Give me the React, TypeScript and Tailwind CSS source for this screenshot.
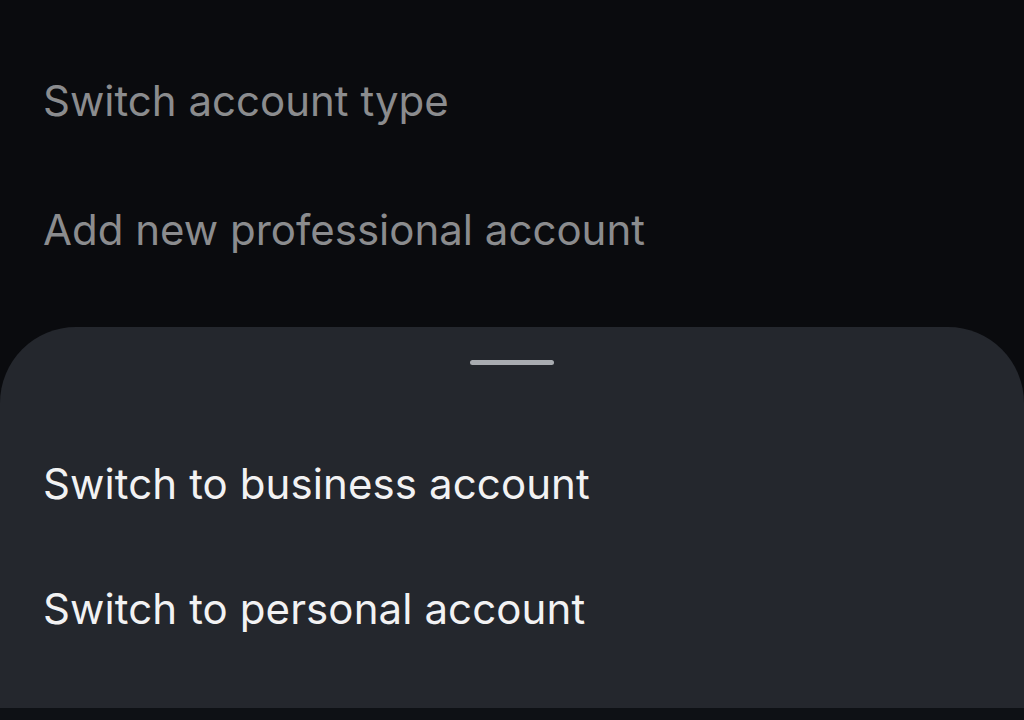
const MENU = ["Switch account type", "Add new professional account"];
const OPTIONS = ["Switch to business account", "Switch to personal account"];

export default function App() {
  return (
    <div
      className="w-[1024px] h-[720px] bg-[#0a0b0e] flex flex-col overflow-hidden"
      style={{ fontFamily: "Inter, 'Noto Sans', sans-serif" }}
    >
      {/* Settings list behind the sheet */}
      <div className="h-[327px] flex flex-col pt-[72px] gap-[71px] px-[43px]">
        {MENU.map((item) => (
          <div key={item} className="h-[58px] flex items-center text-[42px] text-[#8b8c8e] leading-none">
            {item}
          </div>
        ))}
      </div>

      {/* Bottom sheet */}
      <div className="h-[381px] bg-[#24272d] rounded-t-[76px] flex flex-col">
        <div className="flex justify-center pt-[33px]">
          <span className="w-[84px] h-[5px] rounded-full bg-[#a9acb1]" />
        </div>
        <div className="flex flex-col px-[43px] pt-[90px] gap-[67px]">
          {OPTIONS.map((item) => (
            <div key={item} className="h-[58px] flex items-center text-[42px] text-[#f2f2f3] leading-none tracking-[0.1px]">
              {item}
            </div>
          ))}
        </div>
      </div>
      <div className="flex-1 bg-[#0e1115]" />
    </div>
  );
}
